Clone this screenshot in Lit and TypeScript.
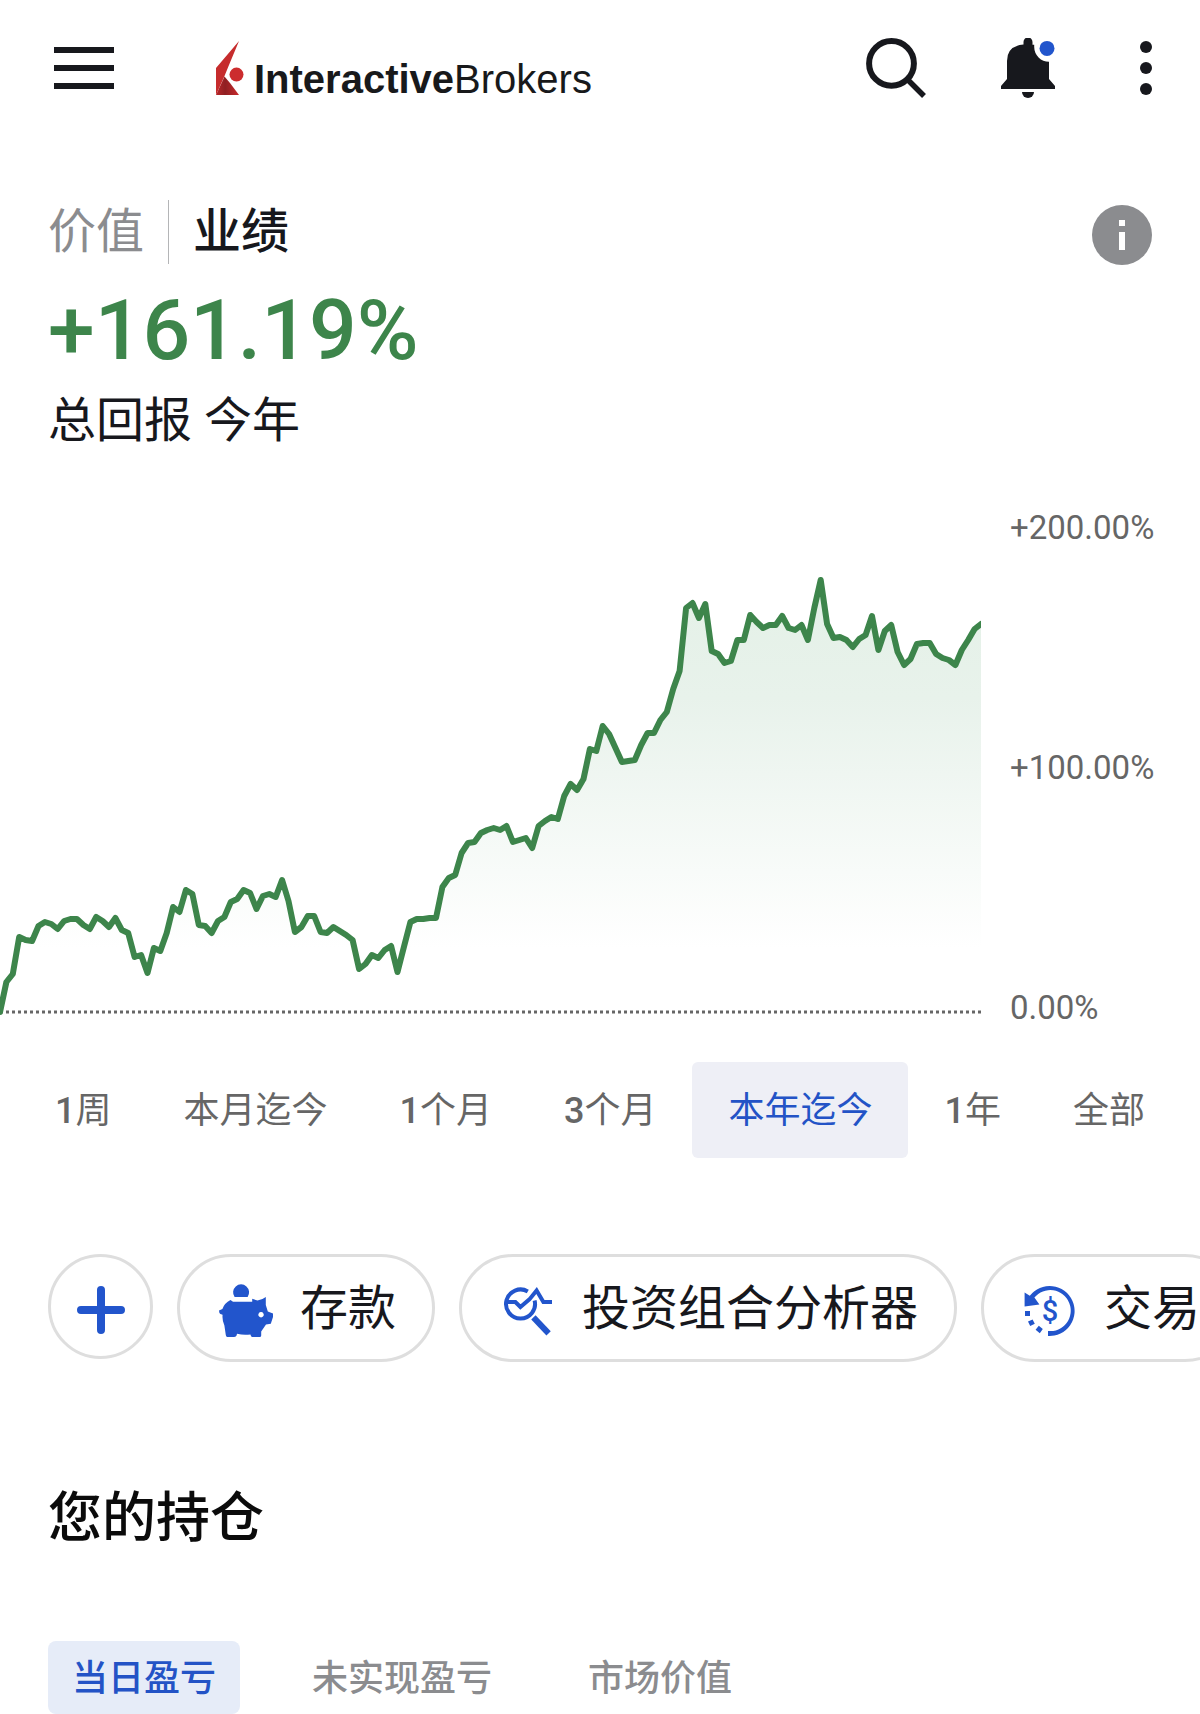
import { LitElement, html, css, svg } from "lit";
import { customElement, state } from "lit/decorators.js";
import { classMap } from "lit/directives/class-map.js";

const FONT = css`Roboto, "Noto Sans CJK SC", sans-serif`;

const STEP = 981 / 153;
const BASELINE = 504;

/** Height of each sample above the 0% line; 240 units are 100%. */
const SERIES = [
  0, 30, 38, 75, 72, 71, 86, 90, 88, 83, 91, 93, 93, 87, 83, 95, 91, 85, 94, 82,
  79, 55, 57, 39, 64, 61, 79, 105, 100, 122, 118, 87, 86, 79, 91, 95, 110, 113, 122, 119,
  103, 116, 118, 115, 132, 111, 80, 85, 96, 96, 80, 79, 85, 81, 77, 72, 43, 48, 57, 54,
  62, 66, 40, 65, 90, 93, 93, 94, 94, 125, 134, 137, 159, 169, 170, 179, 182, 184, 182, 186,
  170, 172, 174, 164, 186, 191, 195, 193, 216, 228, 222, 233, 263, 261, 286, 278, 264, 250, 251, 252,
  267, 279, 279, 292, 300, 323, 341, 404, 409, 394, 408, 361, 358, 349, 351, 372, 372, 397, 390, 384,
  387, 387, 396, 384, 382, 387, 372, 404, 432, 388, 374, 375, 372, 365, 373, 377, 396, 362, 381, 387,
  360, 347, 353, 368, 369, 369, 358, 354, 352, 347, 362, 372, 383, 388,
];

@customElement("performance-chart")
export class PerformanceChart extends LitElement {
  static styles = css`
    :host {
      display: grid;
      grid-template-columns: minmax(0, 981fr) minmax(0, 219fr);
    }
    .plot {
      width: 100%;
      height: 520px;
      display: block;
    }
    .axis {
      display: flex;
      flex-direction: column;
      justify-content: space-between;
      padding-left: 29px;
      font: 400 33px/40px ${FONT};
      color: #666;
    }
  `;

  render() {
    const points = SERIES.map((h, i) => `${(i * STEP).toFixed(1)},${BASELINE - h}`).join(" ");
    return html`
      <svg class="plot" viewBox="0 0 981 520" preserveAspectRatio="none" role="img" aria-label="总回报">
        <defs>
          <linearGradient id="fade" gradientUnits="userSpaceOnUse" x1="0" y1="72" x2="0" y2="440">
            <stop offset="0" stop-color="#e4f1e7"></stop>
            <stop offset="0.32" stop-color="#e8f2eb"></stop>
            <stop offset="1" stop-color="#e8f2eb" stop-opacity="0"></stop>
          </linearGradient>
        </defs>
        <polygon points="${points} 981,${BASELINE} 0,${BASELINE}" fill="url(#fade)"></polygon>
        <line x1="0" y1="504" x2="981" y2="504" stroke="#666" stroke-width="3" stroke-dasharray="3 3"></line>
        <polyline points=${points} fill="none" stroke="#3d854b" stroke-width="6" stroke-linejoin="round" stroke-linecap="round"></polyline>
      </svg>
      <div class="axis">
        <span>+200.00%</span>
        <span>+100.00%</span>
        <span>0.00%</span>
      </div>
    `;
  }
}

const pigIcon = svg`
  <path d="M18.6 19a8 8 0 1 1 13 0z"/>
  <path fill-rule="evenodd" d="M14.5 22L17 23.8H36.2V20.8L41.5 22.6Q46 22 49.8 19V27L51.8 33.4L57 35.6V39L54.8 45.8L50 46.4L45.2 53.5V57.4Q45.2 59 43.6 59H36.4Q35 59 34.4 56.4Q28 57.4 21 55.8Q20.6 59 18 59H11.4Q10 59 9.8 57L8.4 47.4Q6 42 6.6 36.8L4.4 36Q3 35 3 32.6L6.4 31Q8.4 25 14.5 22zM45 34a2.7 2.7 0 1 0 .1 0z"/>`;

const analyzerIcon = svg`
  <g fill="none" stroke="currentColor" stroke-width="4">
    <path d="M29.8 13.4A14.5 14.5 0 1 0 36.6 22.4"/>
    <path d="M9 24H17.4L22.4 29L31.4 21.4L38.6 12.4L45.4 24H54"/>
    <path d="M35.4 39.4L50.6 55.4" stroke-width="6"/>
  </g>`;

const historyIcon = svg`
  <path d="M28 58V53A20.5 20.5 0 1 0 14.4 19.6L19.4 26.4L4.6 28.6V14.6L9.8 17.8A25 25 0 1 1 28 58z"/>
  <path d="M5 33h5v5h-5zM8 43.4l4.6-2 2.2 4.4-4.6 2.2zM15.6 51.8l3.2-4 4 3.2-3 4.2z"/>
  <text x="30" y="43" text-anchor="middle" font-family="Roboto, sans-serif" font-size="29" font-weight="500">$</text>`;

@customElement("app-root")
export class AppRoot extends LitElement {
  @state() private view = "业绩";
  @state() private range = "本年迄今";
  @state() private column = "当日盈亏";

  private readonly views = ["价值", "业绩"];
  private readonly ranges = [
    { count: "1", unit: "周" },
    { count: "", unit: "本月迄今" },
    { count: "1", unit: "个月" },
    { count: "3", unit: "个月" },
    { count: "", unit: "本年迄今" },
    { count: "1", unit: "年" },
    { count: "", unit: "全部" },
  ];
  private readonly columns = ["当日盈亏", "未实现盈亏", "市场价值"];
  private readonly actions = [
    { label: "存款", icon: pigIcon },
    { label: "投资组合分析器", icon: analyzerIcon },
    { label: "交易", icon: historyIcon },
  ];

  static styles = css`
    :host {
      display: block;
      overflow: hidden;
      background: #fff;
      color: #17181d;
      font-family: ${FONT};
    }
    button {
      appearance: none;
      margin: 0;
      padding: 0;
      border: 0;
      background: none;
      color: inherit;
      font: inherit;
      white-space: nowrap;
      cursor: pointer;
    }
    svg {
      display: block;
    }
    .bar {
      display: flex;
      align-items: center;
      height: 136px;
      padding: 0 38px 0 54px;
    }
    .brand {
      display: flex;
      align-items: flex-end;
      gap: 8px;
      margin-left: 102px;
      color: #18191b;
      font: 400 40px/32px "Liberation Sans", sans-serif;
      text-decoration: none;
    }
    .brand b {
      font-weight: 700;
    }
    .tools {
      display: flex;
      gap: 72px;
      margin-left: auto;
    }
    .summary {
      padding: 64px 48px 0;
    }
    .top {
      display: flex;
      align-items: flex-start;
      justify-content: space-between;
      height: 65px;
    }
    .info {
      align-self: flex-end;
    }
    .views {
      display: flex;
      font-size: 48px;
      line-height: 64px;
    }
    .view {
      color: #8b8c8f;
    }
    .view + .view {
      margin-left: 24px;
      padding-left: 24px;
      border-left: 1px solid #b4b5b7;
    }
    .view.on {
      color: #17181d;
      font-weight: 500;
    }
    .total {
      margin: 18px 0 0;
      color: #3d854b;
      font-size: 84px;
      font-weight: 500;
      line-height: 96px;
    }
    .caption {
      margin: 12px 0 0;
      font-size: 48px;
      line-height: 60px;
    }
    performance-chart {
      margin-top: 57px;
    }
    .ranges {
      display: flex;
      justify-content: center;
      margin-top: 34px;
    }
    .range {
      height: 96px;
      padding: 0 36px 6px;
      border-radius: 6px;
      color: #666;
      font-size: 36px;
    }
    .count {
      font-weight: 500;
    }
    .range.on {
      background: #eeeff6;
      color: #2353c6;
    }
    .actions {
      display: flex;
      gap: 24px;
      margin-top: 96px;
      padding-left: 48px;
      overflow: hidden;
    }
    .add,
    .chip {
      flex: none;
      display: flex;
      align-items: center;
      box-sizing: border-box;
      border: 3px solid #dedede;
    }
    .add {
      justify-content: center;
      width: 105px;
      height: 105px;
      border-radius: 50%;
      color: #2255cc;
    }
    .chip {
      gap: 24px;
      height: 108px;
      padding: 0 36px;
      border-radius: 54px;
      font-size: 48px;
    }
    .chip svg {
      color: #2255cc;
      fill: currentColor;
    }
    .label {
      padding-bottom: 8px;
    }
    .heading {
      margin: 121px 48px 0;
      color: #0b0b0b;
      font-size: 54px;
      font-weight: 500;
      line-height: 72px;
    }
    .columns {
      display: flex;
      gap: 48px;
      margin-top: 86px;
      padding: 0 48px;
    }
    .column {
      height: 73px;
      padding: 0 24px 6px;
      border-radius: 8px;
      color: #8b8c8f;
      font-size: 36px;
      font-weight: 500;
    }
    .column.on {
      background: #e6ecf8;
      color: #2353c6;
    }
  `;

  render() {
    return html`
      <header class="bar">
        <button aria-label="菜单">
          <svg width="60" height="60" viewBox="0 0 60 60" stroke="#17181d" stroke-width="6">
            <path d="M0 12H60M0 30H60M0 48H60"></path>
          </svg>
        </button>
        <a class="brand" href="#">
          <svg width="30" height="54" viewBox="0 0 30 54">
            <defs>
              <linearGradient id="shade" x1="0" y1="0" x2="1" y2="0">
                <stop offset="0" stop-color="#b92629"></stop>
                <stop offset="0.4" stop-color="#8f1f22"></stop>
                <stop offset="1" stop-color="#c9292c"></stop>
              </linearGradient>
            </defs>
            <path d="M0 27L23 0L13 24L8.5 35L0 54z" fill="#c62c2d"></path>
            <path d="M0 54L8.5 35.5L14 42L23 54z" fill="url(#shade)"></path>
            <circle cx="20.5" cy="33.6" r="7" fill="#cc2c2e"></circle>
          </svg>
          <span><b>Interactive</b>Brokers</span>
        </a>
        <div class="tools">
          <button aria-label="搜索">
            <svg width="60" height="60" viewBox="0 0 60 60" fill="none" stroke="#17181d" stroke-width="6">
              <circle cx="25.5" cy="25.4" r="22.4"></circle>
              <path d="M41 41L58 58" stroke-width="5.4"></path>
            </svg>
          </button>
          <button aria-label="通知">
            <svg width="60" height="60" viewBox="0 0 60 60" fill="#17181d">
              <path d="M25.5 6.6V4a4.5 4.5 0 0 1 9 0V6.8H36.2V9A15 15 0 0 0 51 23.8V41L57 48V51H3V48L9 41V23Q9 8 25.5 6.6z"></path>
              <path d="M24 54H36a6 6 0 0 1-12 0z"></path>
              <circle cx="49" cy="10.4" r="7.5" fill="#2255cc"></circle>
            </svg>
          </button>
          <button aria-label="更多">
            <svg width="32" height="60" viewBox="0 0 32 60" fill="#17181d">
              <circle cx="16" cy="9" r="6"></circle>
              <circle cx="16" cy="30" r="6"></circle>
              <circle cx="16" cy="51" r="6"></circle>
            </svg>
          </button>
        </div>
      </header>

      <main>
        <section class="summary">
          <div class="top">
            <div class="views">
              ${this.views.map(
                (v) => html`<button class=${classMap({ view: true, on: v === this.view })} @click=${() => (this.view = v)}>${v}</button>`
              )}
            </div>
            <button class="info" aria-label="信息">
              <svg width="60" height="60" viewBox="0 0 60 60">
                <circle cx="30" cy="30" r="30" fill="#8b8c8f"></circle>
                <path d="M27 15h6v6h-6zM27 27h6v18h-6z" fill="#fff"></path>
              </svg>
            </button>
          </div>
          <p class="total">+161.19%</p>
          <p class="caption">总回报 今年</p>
        </section>

        <performance-chart></performance-chart>

        <nav class="ranges">
          ${this.ranges.map(({ count, unit }) => {
            const name = count + unit;
            return html`<button class=${classMap({ range: true, on: name === this.range })} @click=${() => (this.range = name)}><span class="count">${count}</span>${unit}</button>`;
          })}
        </nav>

        <div class="actions">
          <button class="add" aria-label="添加">
            <svg width="60" height="60" viewBox="0 0 60 60" stroke="currentColor" stroke-width="8" stroke-linecap="round">
              <path d="M10 33H50M30 13V53"></path>
            </svg>
          </button>
          ${this.actions.map(
            (a) => html`<button class="chip">
              <svg width="60" height="60" viewBox="0 0 60 60" aria-hidden="true">${a.icon}</svg>
              <span class="label">${a.label}</span>
            </button>`
          )}
        </div>

        <h2 class="heading">您的持仓</h2>

        <div class="columns">
          ${this.columns.map(
            (c) => html`<button class=${classMap({ column: true, on: c === this.column })} @click=${() => (this.column = c)}>${c}</button>`
          )}
        </div>
      </main>
    `;
  }
}
